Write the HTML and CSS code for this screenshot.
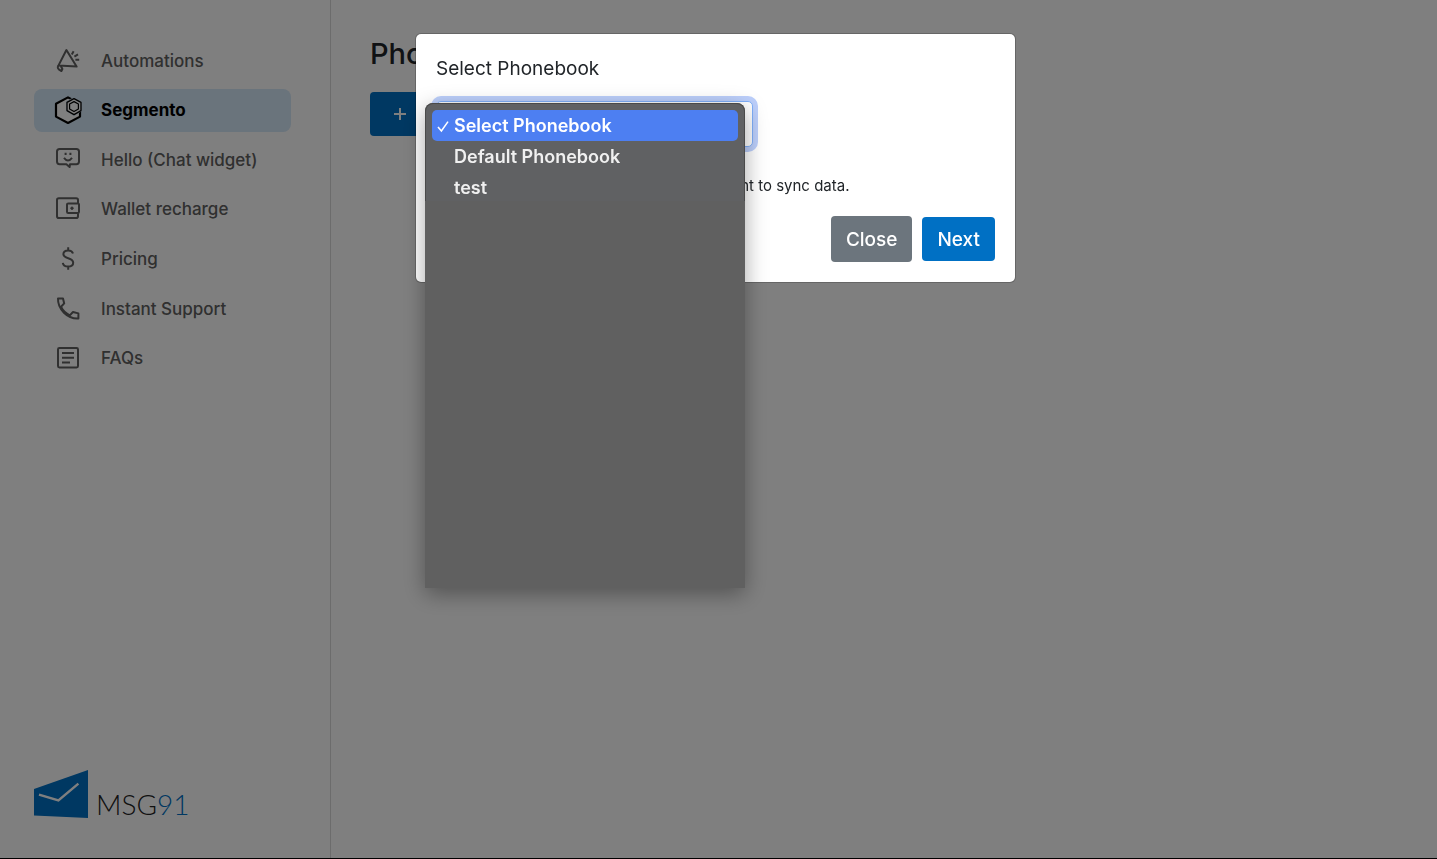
FILE: index.html
```html
<!DOCTYPE html>
<html lang="en">
<head>
  <meta charset="UTF-8" />
  <meta name="viewport" content="width=device-width, initial-scale=1" />
  <title>Phonebook</title>
  <link rel="stylesheet" href="styles.css">
</head>
<body>
  <div class="page">
    <aside class="sidebar">
      <nav>
        <ul class="nav-list">
          <li>
            <a href="#automations" class="nav-link">
              <svg class="icon" viewBox="0 0 28 28">
                <path d="M12.4 3 L4.4 18.6 L22.6 19.6 Z" />
                <path d="M4.4 18.6 C3 20.4 3.8 22.4 7.4 24 L8.4 22 L6.8 19" />
                <path d="M17.8 7.4 L19.6 4.2 M20.4 9.6 L24 7.4 M21.4 12.8 H25.2" />
              </svg>
              Automations
            </a>
          </li>
          <li>
            <a href="#segmento" class="nav-link active">
              <svg class="icon" viewBox="0 0 28 28">
                <path class="hex-fill" d="M14 1.4 L26 7.8 V20.6 L14 27 L2 20.6 V7.8 Z" stroke-width="2.2" />
                <path class="hex-cover" d="M20 1 L28 5.5 V15 L20 20 L12 15 V5.5 Z" />
                <path class="hex-fill" d="M20 2.6 L27 6.4 V14.6 L20 18.6 L13 14.6 V6.4 Z" stroke-width="1.3" />
                <path class="hex-fill" d="M20 5.6 L24.4 8 V13 L20 15.6 L15.6 13 V8 Z" stroke-width="1.2" />
              </svg>
              Segmento
            </a>
          </li>
          <li>
            <a href="#hello" class="nav-link">
              <svg class="icon" viewBox="0 0 28 28">
                <path d="M5.6 3 H22.4 Q25 3 25 5.6 V15.6 Q25 18.2 22.4 18.2 H16 L15.6 21 L12.4 18.2 H5.6 Q3 18.2 3 15.6 V5.6 Q3 3 5.6 3 Z" />
                <path d="M10 11.8 Q14 17 18 11.8 M11.6 6.8 V9 M16.4 6.8 V9" />
              </svg>
              Hello (Chat widget)
            </a>
          </li>
          <li>
            <a href="#wallet" class="nav-link">
              <svg class="icon" viewBox="0 0 28 28">
                <path d="M24 8.4 V5 Q24 3.2 22.2 3.2 H4.8 Q3 3.2 3 5 V21.2 Q3 23 4.8 23 H22.2 Q24 23 24 21.2 V18.2" />
                <rect x="13" y="8.4" width="12" height="9.6" rx="1.2" />
                <circle cx="18" cy="13.2" r="1.2" fill="currentColor" stroke-width="1" />
              </svg>
              Wallet recharge
            </a>
          </li>
          <li>
            <a href="#pricing" class="nav-link">
              <svg class="icon" viewBox="0 0 28 28">
                <path d="M19 8.6 C18.4 6.4 16.6 5.4 14.2 5.4 C11.2 5.4 9.4 6.9 9.4 9.1 C9.4 11.6 11.6 12.5 14.2 13.2 C17.2 14 19.2 15 19.2 17.8 C19.2 20.2 17.2 21.6 14.2 21.6 C11.2 21.6 9.2 20.2 8.8 17.8 M14.2 2.2 V5.4 M14.2 21.6 V24.8" />
              </svg>
              Pricing
            </a>
          </li>
          <li>
            <a href="#support" class="nav-link">
              <svg class="icon" viewBox="0 0 28 28">
                <path d="M4 3.4 H9 L10.2 8.4 L7 11.8 C9 16 12 18.6 15.8 20.4 L19 17 L24.4 18.4 V23.4 C13.4 24 3.6 14.2 4 3.4 Z" />
              </svg>
              Instant Support
            </a>
          </li>
          <li>
            <a href="#faqs" class="nav-link">
              <svg class="icon" viewBox="0 0 28 28">
                <rect x="4" y="4" width="20" height="19.4" rx="1.4" />
                <path d="M8 9 H20 M8 13.7 H20 M8 18.4 H16" />
              </svg>
              FAQs
            </a>
          </li>
        </ul>
      </nav>
      <a href="#home" class="logo">
        <svg class="logo-mark" viewBox="0 0 54 48" aria-hidden="true">
          <path d="M0 19 L54 0 V48 L0 45.6 Z" fill="#0070c4" />
          <path d="M5 24.6 L24.4 30.4 L44.4 13.6" fill="none" stroke="#fff" stroke-width="2.4" />
        </svg>
        <span class="logo-text">MSG<span class="logo-num">91</span></span>
      </a>
    </aside>

    <main class="content">
      <h1>Phonebook</h1>
      <button type="button" class="btn btn-primary btn-create">
        <svg class="plus" viewBox="0 0 14 14" aria-hidden="true"><path d="M7 1 V13 M1 7 H13" /></svg>
        Create Phonebook
      </button>
    </main>
  </div>

  <div class="backdrop">
    <form class="modal" role="dialog" aria-labelledby="modal-title">
      <label for="phonebook" id="modal-title" class="modal-title">Select Phonebook</label>
      <div class="field">
        <select id="phonebook" class="select">
          <option>Select Phonebook</option>
          <option>Default Phonebook</option>
          <option>test</option>
        </select>
        <div class="menu">
          <ul class="menu-list" role="listbox" aria-labelledby="modal-title">
            <li class="option selected" role="option" aria-selected="true">
              <svg class="check" viewBox="0 0 14 14" aria-hidden="true"><path d="M2 8 L5.4 12 L12 2.6" /></svg>
              Select Phonebook
            </li>
            <li class="option" role="option">Default Phonebook</li>
            <li class="option" role="option">test</li>
          </ul>
        </div>
      </div>
      <p class="hint">Select the phonebook with which you'd want to sync data.</p>
      <div class="actions">
        <button type="button" class="btn btn-secondary">Close</button>
        <button type="submit" class="btn btn-primary">Next</button>
      </div>
    </form>
  </div>
</body>
</html>
```
FILE: styles.css
```css
* {
  box-sizing: border-box;
}

body {
  margin: 0;
  font-family: Inter, sans-serif;
  font-size: 17px;
  color: #212529;
  background: #fff;
}

h1, p, ul {
  margin: 0;
  padding: 0;
}

ul {
  list-style: none;
}

.page {
  display: flex;
  min-height: 100vh;
  border-bottom: 1px solid #000;
}

/* sidebar */
.sidebar {
  display: flex;
  flex-direction: column;
  justify-content: space-between;
  width: 331px;
  padding: 39px 39px 40px 34px;
  border-right: 1px solid #d8d8d8;
}

.nav-list {
  display: grid;
  grid-auto-rows: 1fr;
  gap: 6px;
  height: 341px;
}

.nav-link {
  display: flex;
  align-items: center;
  gap: 19px;
  height: 100%;
  padding: 0 20px;
  border-radius: 8px;
  color: #606060;
  font-weight: 500;
  text-decoration: none;
}

.nav-link.active {
  background: #d4e8f8;
  color: #000;
  font-weight: 700;
}

.icon {
  width: 28px;
  height: 28px;
  fill: none;
  stroke: currentColor;
  stroke-width: 2;
  stroke-linejoin: round;
}

.hex-fill {
  fill: #fff;
}

.hex-cover {
  fill: #d4e8f8;
  stroke: none;
}

.logo {
  display: flex;
  align-items: flex-end;
  gap: 8px;
  text-decoration: none;
}

.logo-mark {
  width: 54px;
  height: 48px;
}

.logo-text {
  font-family: Lato, sans-serif;
  font-weight: 300;
  font-size: 28px;
  line-height: 28px;
  color: #222;
}

.logo-num {
  color: #0070c4;
}

/* content */
.content {
  flex: 1;
  padding: 36px 39px;
}

h1 {
  margin-bottom: 20px;
  font-size: 29px;
  line-height: 36px;
  font-weight: 500;
}

.btn {
  height: 44px;
  padding: 0 15px;
  border: 0;
  border-radius: 4px;
  color: #fff;
  font-family: inherit;
  font-size: 19px;
  font-weight: 500;
  cursor: pointer;
}

.btn-primary {
  background: #0070c4;
}

.btn-secondary {
  height: 46px;
  background: #6c757d;
}

.btn-create {
  display: flex;
  align-items: center;
  gap: 10px;
  padding: 0 23px;
}

.plus {
  width: 14px;
  height: 14px;
  fill: none;
  stroke: #fff;
  stroke-width: 2;
}

/* modal */
.backdrop {
  position: fixed;
  inset: 0;
  display: flex;
  justify-content: center;
  align-items: flex-start;
  padding: 33px 6px 0 0;
  background: rgba(0, 0, 0, 0.5);
}

.modal {
  width: 100%;
  max-width: 601px;
  padding: 20px;
  border: 1px solid rgba(0, 0, 0, 0.2);
  border-radius: 6px;
  background: #fff;
  background-clip: padding-box;
}

.modal-title {
  display: block;
  margin-bottom: 18px;
  font-size: 19px;
  line-height: 29px;
}

.field {
  position: relative;
  width: 317px;
  margin-bottom: 28px;
}

.select {
  display: block;
  width: 100%;
  height: 46px;
  padding: 0 12px;
  border: 1px solid #80b0fa;
  border-radius: 5px;
  outline: 0;
  appearance: none;
  background: #fff;
  box-shadow: 0 0 0 5px #bccffb;
  font: inherit;
}

/* open list, drawn over the select */
.menu {
  position: absolute;
  top: 2px;
  left: -11px;
  width: 320px;
  height: 485px;
  border-radius: 8px 8px 0 0;
  background: #606060;
  box-shadow: 0 6px 22px rgba(0, 0, 0, 0.35);
}

.menu-list {
  height: 98px;
  padding: 6px 6px 0;
  border: 1px solid #4a4a4a;
  border-bottom: 0;
  border-radius: 8px 8px 0 0;
  background: #606163;
}

.option {
  display: flex;
  align-items: center;
  height: 31px;
  padding-left: 22px;
  border-radius: 5px;
  color: #f0f0f0;
  font-size: 18px;
  font-weight: 600;
}

.option.selected {
  gap: 4px;
  padding-left: 4px;
  background: #4d7ff2;
  color: #fff;
}

.check {
  width: 14px;
  height: 14px;
  fill: none;
  stroke: #fff;
  stroke-width: 1.6;
}

.hint {
  margin-bottom: 20px;
  font-size: 15px;
  line-height: 21px;
}

.actions {
  display: flex;
  justify-content: flex-end;
  align-items: center;
  gap: 10px;
}
```
